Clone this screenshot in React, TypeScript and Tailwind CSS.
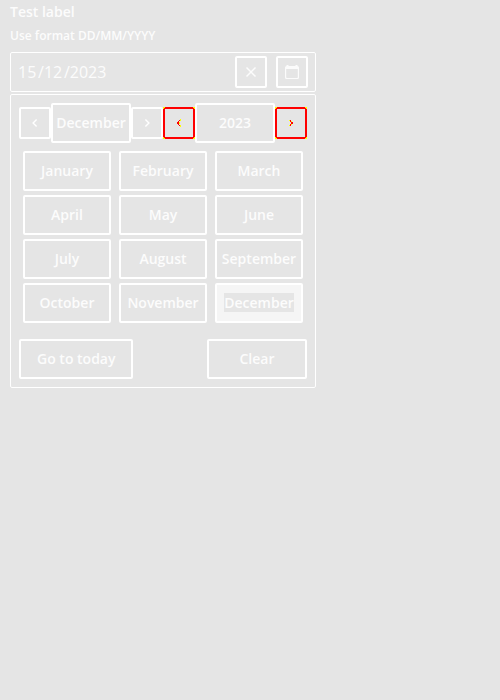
import type { ReactNode } from 'react';

const MONTHS = [
  ['January', 'February', 'March'],
  ['April', 'May', 'June'],
  ['July', 'August', 'September'],
  ['October', 'November', 'December'],
];

const selectedMonth = 'December';

const box = 'flex items-center justify-center rounded-[2px] border-2 font-semibold';

function IconButton({ label, changed = false, children }: { label: string; changed?: boolean; children: ReactNode }) {
  return (
    <button
      type="button"
      aria-label={label}
      className={`${box} relative size-8 shrink-0 ${changed ? 'border-[#ff0000]' : 'border-white'}`}
    >
      {children}
      {changed && (
        <svg className="absolute -inset-[2px] size-8" viewBox="0 0 32 32" shapeRendering="crispEdges" aria-hidden="true">
          <path
            fill="#ffff00"
            d="M0 0h2v1h-1v1h-1zM30 0h2v2h-1v-1h-1zM0 30h1v1h1v1h-2zM31 30h1v2h-2v-1h1z"
          />
        </svg>
      )}
    </button>
  );
}

function Chevron({ d }: { d: string }) {
  return (
    <svg className="size-4" viewBox="0 0 16 16" fill="none" stroke="#fff" strokeWidth="1.4" aria-hidden="true">
      <path d={d} />
    </svg>
  );
}

function ChangedChevron({ red, yellow }: { red: string; yellow: string }) {
  return (
    <svg className="size-4" viewBox="0 0 16 16" shapeRendering="crispEdges" aria-hidden="true">
      <path fill="#ffff00" d={yellow} />
      <path fill="#ff0000" d={red} />
    </svg>
  );
}

function Segment({ id, label, value, wide = false }: { id?: string; label: string; value: string; wide?: boolean }) {
  return (
    <input
      id={id}
      aria-label={label}
      defaultValue={value}
      className={`${wide ? 'w-12' : 'w-5'} bg-transparent p-0 text-base outline-none`}
    />
  );
}

export default function App() {
  return (
    <main className="min-h-screen bg-[#e5e5e5] px-[10px] pt-[2px] font-['Open_Sans','Noto_Sans',sans-serif] text-[#fcfcfc]">
      <div className="w-full max-w-[306px]">
        <label htmlFor="day" className="block text-sm leading-5 font-semibold">
          Test label
        </label>
        <p className="mt-1 mb-[6px] text-xs leading-5 font-semibold">Use format DD/MM/YYYY</p>

        <div className="flex h-10 items-center rounded-[2px] border border-white px-[7px]">
          <div role="group" aria-label="Date" className="flex flex-1 items-center text-base">
            <Segment id="day" label="Day" value="15" />
            <span>/</span>
            <Segment label="Month" value="12" />
            <span>/</span>
            <Segment label="Year" value="2023" wide />
          </div>
          <div className="flex gap-[9px]">
            <IconButton label="Clear date">
              <svg className="size-4" viewBox="0 0 16 16" fill="none" stroke="#fcfcfc" strokeWidth="1.5" aria-hidden="true">
                <path d="M3.5 3.5l9 9M12.5 3.5l-9 9" />
              </svg>
            </IconButton>
            <IconButton label="Open calendar">
              <svg className="size-4" viewBox="0 0 16 16" fill="#fbfbfb" aria-hidden="true">
                <path
                  fillRule="evenodd"
                  d="M2.5 1h2v1h7V1h2v1q1.5 0 1.5 1.5v10q0 1.5-1.5 1.5h-11q-1.5 0-1.5-1.5v-10q0-1.5 1.5-1.5zM2.2 5v8.2q0 .7.7.7h10.2q.7 0 .7-.7V5z"
                />
              </svg>
            </IconButton>
          </div>
        </div>

        <section aria-label="Calendar" className="mt-[2px] rounded-[2px] border border-white p-2">
          <div className="flex items-center text-sm">
            <IconButton label="Previous month">
              <Chevron d="M9.6 4.5L6.1 8l3.5 3.5" />
            </IconButton>
            <button type="button" className={`${box} h-10 flex-1 border-white`}>
              December
            </button>
            <IconButton label="Next month">
              <Chevron d="M6.4 4.5L9.9 8l-3.5 3.5" />
            </IconButton>
            <IconButton label="Previous year" changed>
              <ChangedChevron
                yellow="M9 4h1v2h-1zM8 7h1v2h-1zM9 10h1v2h-1z"
                red="M8 5h1v1h-1zM7 6h1v1h-1zM6 7h2v2h-2zM7 9h1v1h-1zM8 10h1v1h-1z"
              />
            </IconButton>
            <button type="button" className={`${box} h-10 flex-1 border-white`}>
              2023
            </button>
            <IconButton label="Next year" changed>
              <ChangedChevron
                yellow="M6 5h1v1h-1zM8 6h1v1h-1zM8 9h1v1h-1zM6 10h1v1h-1z"
                red="M7 5h1v2h-1zM8 7h2v2h-2zM7 9h1v2h-1z"
              />
            </IconButton>
          </div>

          <table className="mt-[6px] w-full table-fixed border-collapse text-sm">
            <tbody>
              {MONTHS.map((row) => (
                <tr key={row[0]}>
                  {row.map((month) => (
                    <td key={month} className="px-1 py-[2px]">
                      <button
                        type="button"
                        aria-pressed={month === selectedMonth}
                        className={`${box} h-10 w-full border-white ${month === selectedMonth ? 'bg-[#f5f5f5]' : ''}`}
                      >
                        <span className="leading-5">
                          <span className={month === selectedMonth ? 'bg-[#e5e5e5]' : ''}>{month}</span>
                        </span>
                      </button>
                    </td>
                  ))}
                </tr>
              ))}
            </tbody>
          </table>

          <div className="mt-[14px] flex justify-between text-sm">
            <button type="button" className={`${box} h-10 border-white px-4`}>
              Go to today
            </button>
            <button type="button" className={`${box} h-10 w-[100px] border-white`}>
              Clear
            </button>
          </div>
        </section>
      </div>
    </main>
  );
}
